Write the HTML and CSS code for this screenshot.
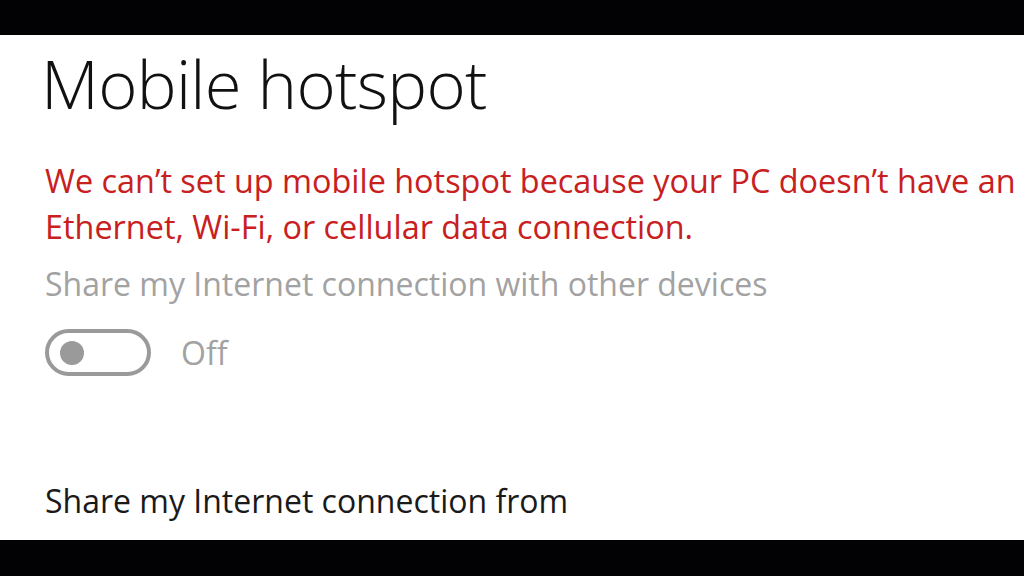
FILE: index.html
```html
<!DOCTYPE html>
<html>
<head>
<meta charset="utf-8">
<link rel="stylesheet" href="styles.css">
</head>
<body>
<div class="bar top"></div>
<main class="page">
  <h1 class="title">Mobile hotspot</h1>
  <p class="error">We can’t set up mobile hotspot because your PC doesn’t have an Ethernet, Wi-Fi, or cellular data connection.</p>
  <p class="label disabled">Share my Internet connection with other devices</p>
  <div class="toggle-row">
    <span class="toggle"><span class="knob"></span></span>
    <span class="state">Off</span>
  </div>
  <p class="label section">Share my Internet connection from</p>
</main>
<div class="bar bottom"></div>
</body>
</html>
```
FILE: styles.css
```css
html, body {
  margin: 0;
  padding: 0;
  background: #000;
  width: 1024px;
  height: 576px;
  overflow: hidden;
}
.bar.top { height: 35px; background: #020104; }
.bar.bottom { height: 36px; background: #020104; }
.page {
  height: 505px;
  background: #fff;
  padding: 0 0 0 43px;
  box-sizing: border-box;
  font-family: "Open Sans", "Noto Sans", sans-serif;
  overflow: hidden;
  display: flex;
  flex-direction: column;
}
.title {
  margin: 8px 0 0 -2px;
  font-size: 67px;
  font-weight: 300;
  line-height: 80px;
  letter-spacing: -0.7px;
  color: #111;
}
.error {
  margin: 34px 0 0 2px;
  font-size: 32.4px;
  line-height: 46px;
  color: #c8201e;
  width: 990px;
}
.label {
  margin: 14px 0 0 2px;
  font-size: 32px;
  line-height: 42px;
}
.disabled { color: #a2a2a2; }
.toggle-row {
  display: flex;
  align-items: center;
  gap: 30px;
  margin: 24px 0 0 2px;
}
.toggle {
  width: 106px;
  height: 47px;
  box-sizing: border-box;
  border: 4px solid #9a9a9a;
  border-radius: 24px;
  display: flex;
  align-items: center;
  padding-left: 11px;
}
.knob {
  width: 24px;
  height: 24px;
  border-radius: 50%;
  background: #9a9a9a;
}
.state {
  font-size: 32px;
  line-height: 42px;
  color: #a2a2a2;
}
.section {
  margin-top: auto;
  margin-bottom: 18px;
  color: #1a1a1a;
}
```
